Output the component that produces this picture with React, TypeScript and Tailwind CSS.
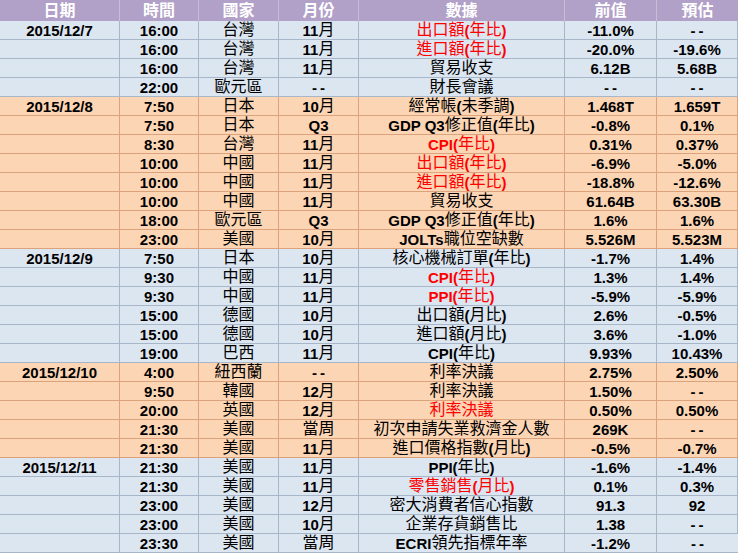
import { Fragment } from "react"

type Row = {
  date?: string
  time: string
  country: string
  month: string
  item: string
  red?: boolean
  prev: string
  est: string
}

type Group = { tone: "blue" | "orange"; rows: Row[] }

const HEAD = ["日期", "時間", "國家", "月份", "數據", "前值", "預估"]

const GROUPS: Group[] = [
  {
    tone: "blue",
    rows: [
      { date: "2015/12/7", time: "16:00", country: "台灣", month: "11月", item: "出口額(年比)", red: true, prev: "-11.0%", est: "--" },
      { time: "16:00", country: "台灣", month: "11月", item: "進口額(年比)", red: true, prev: "-20.0%", est: "-19.6%" },
      { time: "16:00", country: "台灣", month: "11月", item: "貿易收支", prev: "6.12B", est: "5.68B" },
      { time: "22:00", country: "歐元區", month: "--", item: "財長會議", prev: "--", est: "--" },
    ],
  },
  {
    tone: "orange",
    rows: [
      { date: "2015/12/8", time: "7:50", country: "日本", month: "10月", item: "經常帳(未季調)", prev: "1.468T", est: "1.659T" },
      { time: "7:50", country: "日本", month: "Q3", item: "GDP Q3修正值(年比)", prev: "-0.8%", est: "0.1%" },
      { time: "8:30", country: "台灣", month: "11月", item: "CPI(年比)", red: true, prev: "0.31%", est: "0.37%" },
      { time: "10:00", country: "中國", month: "11月", item: "出口額(年比)", red: true, prev: "-6.9%", est: "-5.0%" },
      { time: "10:00", country: "中國", month: "11月", item: "進口額(年比)", red: true, prev: "-18.8%", est: "-12.6%" },
      { time: "10:00", country: "中國", month: "11月", item: "貿易收支", prev: "61.64B", est: "63.30B" },
      { time: "18:00", country: "歐元區", month: "Q3", item: "GDP Q3修正值(年比)", prev: "1.6%", est: "1.6%" },
      { time: "23:00", country: "美國", month: "10月", item: "JOLTs職位空缺數", prev: "5.526M", est: "5.523M" },
    ],
  },
  {
    tone: "blue",
    rows: [
      { date: "2015/12/9", time: "7:50", country: "日本", month: "10月", item: "核心機械訂單(年比)", prev: "-1.7%", est: "1.4%" },
      { time: "9:30", country: "中國", month: "11月", item: "CPI(年比)", red: true, prev: "1.3%", est: "1.4%" },
      { time: "9:30", country: "中國", month: "11月", item: "PPI(年比)", red: true, prev: "-5.9%", est: "-5.9%" },
      { time: "15:00", country: "德國", month: "10月", item: "出口額(月比)", prev: "2.6%", est: "-0.5%" },
      { time: "15:00", country: "德國", month: "10月", item: "進口額(月比)", prev: "3.6%", est: "-1.0%" },
      { time: "19:00", country: "巴西", month: "11月", item: "CPI(年比)", prev: "9.93%", est: "10.43%" },
    ],
  },
  {
    tone: "orange",
    rows: [
      { date: "2015/12/10", time: "4:00", country: "紐西蘭", month: "--", item: "利率決議", prev: "2.75%", est: "2.50%" },
      { time: "9:50", country: "韓國", month: "12月", item: "利率決議", prev: "1.50%", est: "--" },
      { time: "20:00", country: "英國", month: "12月", item: "利率決議", red: true, prev: "0.50%", est: "0.50%" },
      { time: "21:30", country: "美國", month: "當周", item: "初次申請失業救濟金人數", prev: "269K", est: "--" },
      { time: "21:30", country: "美國", month: "11月", item: "進口價格指數(月比)", prev: "-0.5%", est: "-0.7%" },
    ],
  },
  {
    tone: "blue",
    rows: [
      { date: "2015/12/11", time: "21:30", country: "美國", month: "11月", item: "PPI(年比)", prev: "-1.6%", est: "-1.4%" },
      { time: "21:30", country: "美國", month: "11月", item: "零售銷售(月比)", red: true, prev: "0.1%", est: "0.3%" },
      { time: "23:00", country: "美國", month: "12月", item: "密大消費者信心指數", prev: "91.3", est: "92" },
      { time: "23:00", country: "美國", month: "10月", item: "企業存貨銷售比", prev: "1.38", est: "--" },
      { time: "23:30", country: "美國", month: "當周", item: "ECRI領先指標年率", prev: "-1.2%", est: "--" },
    ],
  },
]

// latin bold, CJK regular - like the old excel export
function MixedText({ text }: { text: string }) {
  const parts = text.match(/[\x00-\x7F]+|[^\x00-\x7F]+/g) ?? []
  return (
    <>
      {parts.map((p, i) =>
        /^[\x00-\x7F]+$/.test(p) ? (
          <Num key={i} value={p} />
        ) : (
          <span key={i} className="font-normal text-[16px]">{p}</span>
        ),
      )}
    </>
  )
}

// empty values show as a spaced double dash
function Num({ value }: { value: string }) {
  if (value === "--") return <span className="font-bold tracking-[3px] pl-[3px]">--</span>
  return <span className="font-bold">{value}</span>
}

function Cell({ children, tone, red }: { children: React.ReactNode; tone: "blue" | "orange"; red?: boolean }) {
  const toneCls =
    tone === "blue"
      ? "bg-[#dce6f1] border-[#a7b6c8]"
      : "bg-[#fcd5b4] border-[#dba27c]"
  return (
    <div
      className={`h-[19px] flex items-center justify-center whitespace-nowrap border-r border-b last:border-r-0 leading-none ${toneCls} ${
        red ? "text-[#ff0000]" : "text-black"
      }`}
    >
      {children}
    </div>
  )
}

export default function App() {
  return (
    <div className="w-[738px] h-[555px] bg-white overflow-hidden" style={{ fontFamily: '"Liberation Sans", "Noto Sans CJK TC", sans-serif' }}>
      <div className="grid grid-cols-[120px_79px_80px_80px_206px_92px_81px] text-[15px]">
        {HEAD.map((h, i) => (
          <div
            key={h}
            className={`h-[21px] flex items-center justify-center bg-[#b1a0c7] text-white font-bold text-[16px] leading-none ${
              i < HEAD.length - 1 ? "border-r border-[#c7bdd5]" : ""
            }`}
          >
            {h}
          </div>
        ))}
        {GROUPS.map((g, gi) => (
          <Fragment key={gi}>
            {g.rows.map((r, ri) => (
              <Fragment key={ri}>
                <Cell tone={g.tone}>
                  <span className="font-bold">{r.date ?? ""}</span>
                </Cell>
                <Cell tone={g.tone}>
                  <span className="font-bold">{r.time}</span>
                </Cell>
                <Cell tone={g.tone}>
                  <MixedText text={r.country} />
                </Cell>
                <Cell tone={g.tone}>
                  <MixedText text={r.month} />
                </Cell>
                <Cell tone={g.tone} red={r.red}>
                  <MixedText text={r.item} />
                </Cell>
                <Cell tone={g.tone}>
                  <Num value={r.prev} />
                </Cell>
                <Cell tone={g.tone}>
                  <Num value={r.est} />
                </Cell>
              </Fragment>
            ))}
          </Fragment>
        ))}
      </div>
    </div>
  )
}
